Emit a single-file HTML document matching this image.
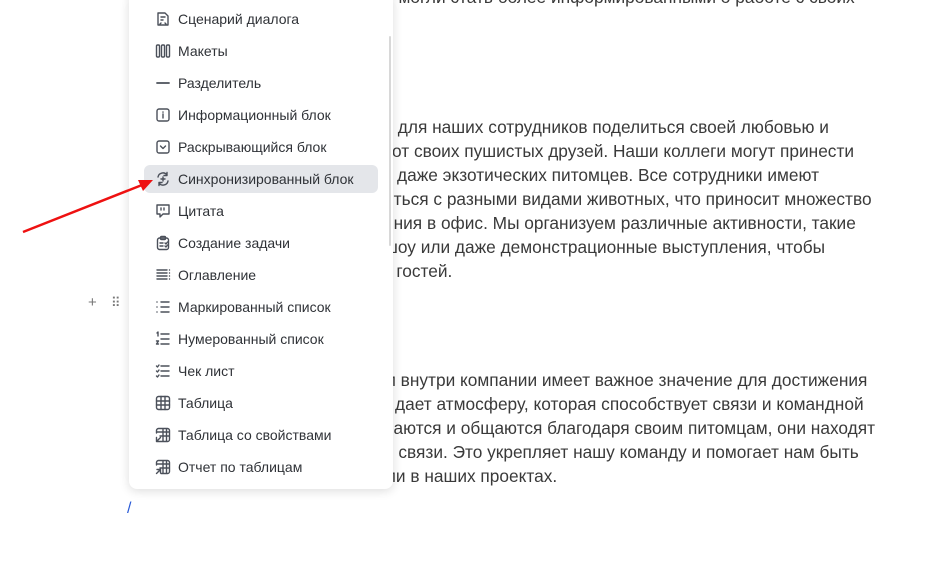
<!DOCTYPE html>
<html><head><meta charset="utf-8"><style>
body{margin:0;width:931px;height:567px;overflow:hidden;background:#fff;font-family:"Liberation Sans",sans-serif;position:relative}
.t{position:absolute;left:384px;font-size:17.3px;color:#3a3a3a;white-space:nowrap;line-height:24px}
.menu{position:absolute;left:129px;top:-8px;width:264px;height:497px;background:#fff;border-radius:8px;box-shadow:0 2px 10px rgba(0,0,0,.14);overflow:hidden}
.it{position:absolute;left:15px;width:234px;height:28px;border-radius:6px;font-size:14px;color:#2f3237;line-height:28px}
.it span{position:absolute;left:34px}
.it svg{position:absolute;left:11px;top:6px;width:16px;height:16px;fill:none;stroke:#4b505a;stroke-width:1.4;stroke-linecap:round;stroke-linejoin:round}
.hl{background:#e4e6ea}
.sb{position:absolute;left:260px;top:44px;width:2px;height:210px;background:#d8d8d8;border-radius:1px}
</style></head><body>
<div class="t" style="top:-15px">и могли стать более информированными о работе с своих</div>
<div class="t" style="top:115px">ь для наших сотрудников поделиться своей любовью и</div>
<div class="t" style="top:139px;left:392px">от своих пушистых друзей. Наши коллеги могут принести</div>
<div class="t" style="top:163px;left:397px">даже экзотических питомцев. Все сотрудники имеют</div>
<div class="t" style="top:187px">иться с разными видами животных, что приносит множество</div>
<div class="t" style="top:211px">ения в офис. Мы организуем различные активности, такие</div>
<div class="t" style="top:235px">шоу или даже демонстрационные выступления, чтобы</div>
<div class="t" style="top:259px">к гостей.</div>
<div class="t" style="top:368px">м внутри компании имеет важное значение для достижения</div>
<div class="t" style="top:392px;left:395px">дает атмосферу, которая способствует связи и командной</div>
<div class="t" style="top:416px">наются и общаются благодаря своим питомцам, они находят</div>
<div class="t" style="top:440px">е связи. Это укрепляет нашу команду и помогает нам быть</div>
<div class="t" style="top:464px">ми в наших проектах.</div>
<div style="position:absolute;left:88px;top:294px;font-size:15px;color:#777">+</div>
<div style="position:absolute;left:111px;top:295px;font-size:13px;color:#777;letter-spacing:-1px">⠿</div>
<div style="position:absolute;left:127px;top:500px;font-size:16px;color:#2a5bd7">/</div>
<div class="menu">
<div class="sb"></div>
<div class="it" style="top:13px"><svg viewBox="0 0 16 16"><path d="M3 2h7l3 3v9H3z M6 6h4 M6 9h2 M6 12l-1 1 1 1 M10 12l1 1-1 1"/></svg><span>Сценарий диалога</span></div>
<div class="it" style="top:45px"><svg viewBox="0 0 16 16"><rect x="1.5" y="2" width="3" height="12" rx="1"/><rect x="6.5" y="2" width="3" height="12" rx="1"/><rect x="11.5" y="2" width="3" height="12" rx="1"/></svg><span>Макеты</span></div>
<div class="it" style="top:77px"><svg viewBox="0 0 16 16"><path d="M2 8h12" stroke-width="1.8"/></svg><span>Разделитель</span></div>
<div class="it" style="top:109px"><svg viewBox="0 0 16 16"><rect x="2" y="2" width="12" height="12" rx="2"/><path d="M8 7v4 M8 5v.2"/></svg><span>Информационный блок</span></div>
<div class="it" style="top:141px"><svg viewBox="0 0 16 16"><rect x="2" y="2" width="12" height="12" rx="2"/><path d="M5.5 7l2.5 2.5 2.5-2.5"/></svg><span>Раскрывающийся блок</span></div>
<div class="it hl" style="top:173px"><svg viewBox="0 0 16 16"><path d="M3 6a5 5 0 0 1 9-2 M13 10a5 5 0 0 1-9 2 M12 1.5v3h-3 M4 14.5v-3h3 M6 8h4 M8 6v4"/></svg><span>Синхронизированный блок</span></div>
<div class="it" style="top:205px"><svg viewBox="0 0 16 16"><path d="M2 2h12v9H8l-3 3v-3H2z M6 5v2 M9 5v2"/></svg><span>Цитата</span></div>
<div class="it" style="top:237px"><svg viewBox="0 0 16 16"><rect x="2.5" y="3" width="11" height="11.5" rx="2"/><rect x="5.5" y="1.5" width="5" height="3" rx="1"/><path d="M5 8h3 M5 11h3 M10 8l1 1 1.5-2 M10 11l1 1 1.5-2"/></svg><span>Создание задачи</span></div>
<div class="it" style="top:269px"><svg viewBox="0 0 16 16"><path d="M2 3h10 M2 6h10 M2 9h10 M2 12h10 M14.5 3v.1 M14.5 6v.1 M14.5 9v.1 M14.5 12v.1"/></svg><span>Оглавление</span></div>
<div class="it" style="top:301px"><svg viewBox="0 0 16 16"><path d="M2 3v.1 M2 8v.1 M2 13v.1 M6 3h8 M6 8h8 M6 13h8"/></svg><span>Маркированный список</span></div>
<div class="it" style="top:333px"><svg viewBox="0 0 16 16"><path d="M2 2l1-1v4 M1.5 10h2l-2 3h2 M6 3h8 M6 8h8 M6 13h8"/></svg><span>Нумерованный список</span></div>
<div class="it" style="top:365px"><svg viewBox="0 0 16 16"><path d="M1.5 3l1 1 1.5-2 M1.5 8l1 1 1.5-2 M1.5 13l1 1 1.5-2 M6 3h8 M6 8h8 M6 13h8"/></svg><span>Чек лист</span></div>
<div class="it" style="top:397px"><svg viewBox="0 0 16 16"><rect x="1.5" y="1.5" width="13" height="13" rx="2"/><path d="M6 1.5v13 M10 1.5v13 M1.5 6h13 M1.5 10h13"/></svg><span>Таблица</span></div>
<div class="it" style="top:429px"><svg viewBox="0 0 16 16"><path d="M6 14.5h6.5a2 2 0 0 0 2-2v-9a2 2 0 0 0-2-2h-9a2 2 0 0 0-2 2V6 M8 1.5v13 M11.5 1.5v13 M1.5 5h13 M5 9h9.5 M1.5 14.5l4-4 M1.5 10.5v4h4"/></svg><span>Таблица со свойствами</span></div>
<div class="it" style="top:461px"><svg viewBox="0 0 16 16"><path d="M6 14.5h6.5a2 2 0 0 0 2-2v-9a2 2 0 0 0-2-2h-9a2 2 0 0 0-2 2V6 M8 1.5v13 M11.5 1.5v13 M1.5 5h13 M5 9h9.5 M1.5 14.5l4-4 M2 10.5h3.5v3.5"/></svg><span>Отчет по таблицам</span></div>
</div>
<svg style="position:absolute;left:0;top:0" width="931" height="567"><line x1="23" y1="232" x2="142" y2="185" stroke="#ee1111" stroke-width="2.5"/><polygon points="153,180 138,180 143,191" fill="#ee1111"/></svg>
</body></html>
